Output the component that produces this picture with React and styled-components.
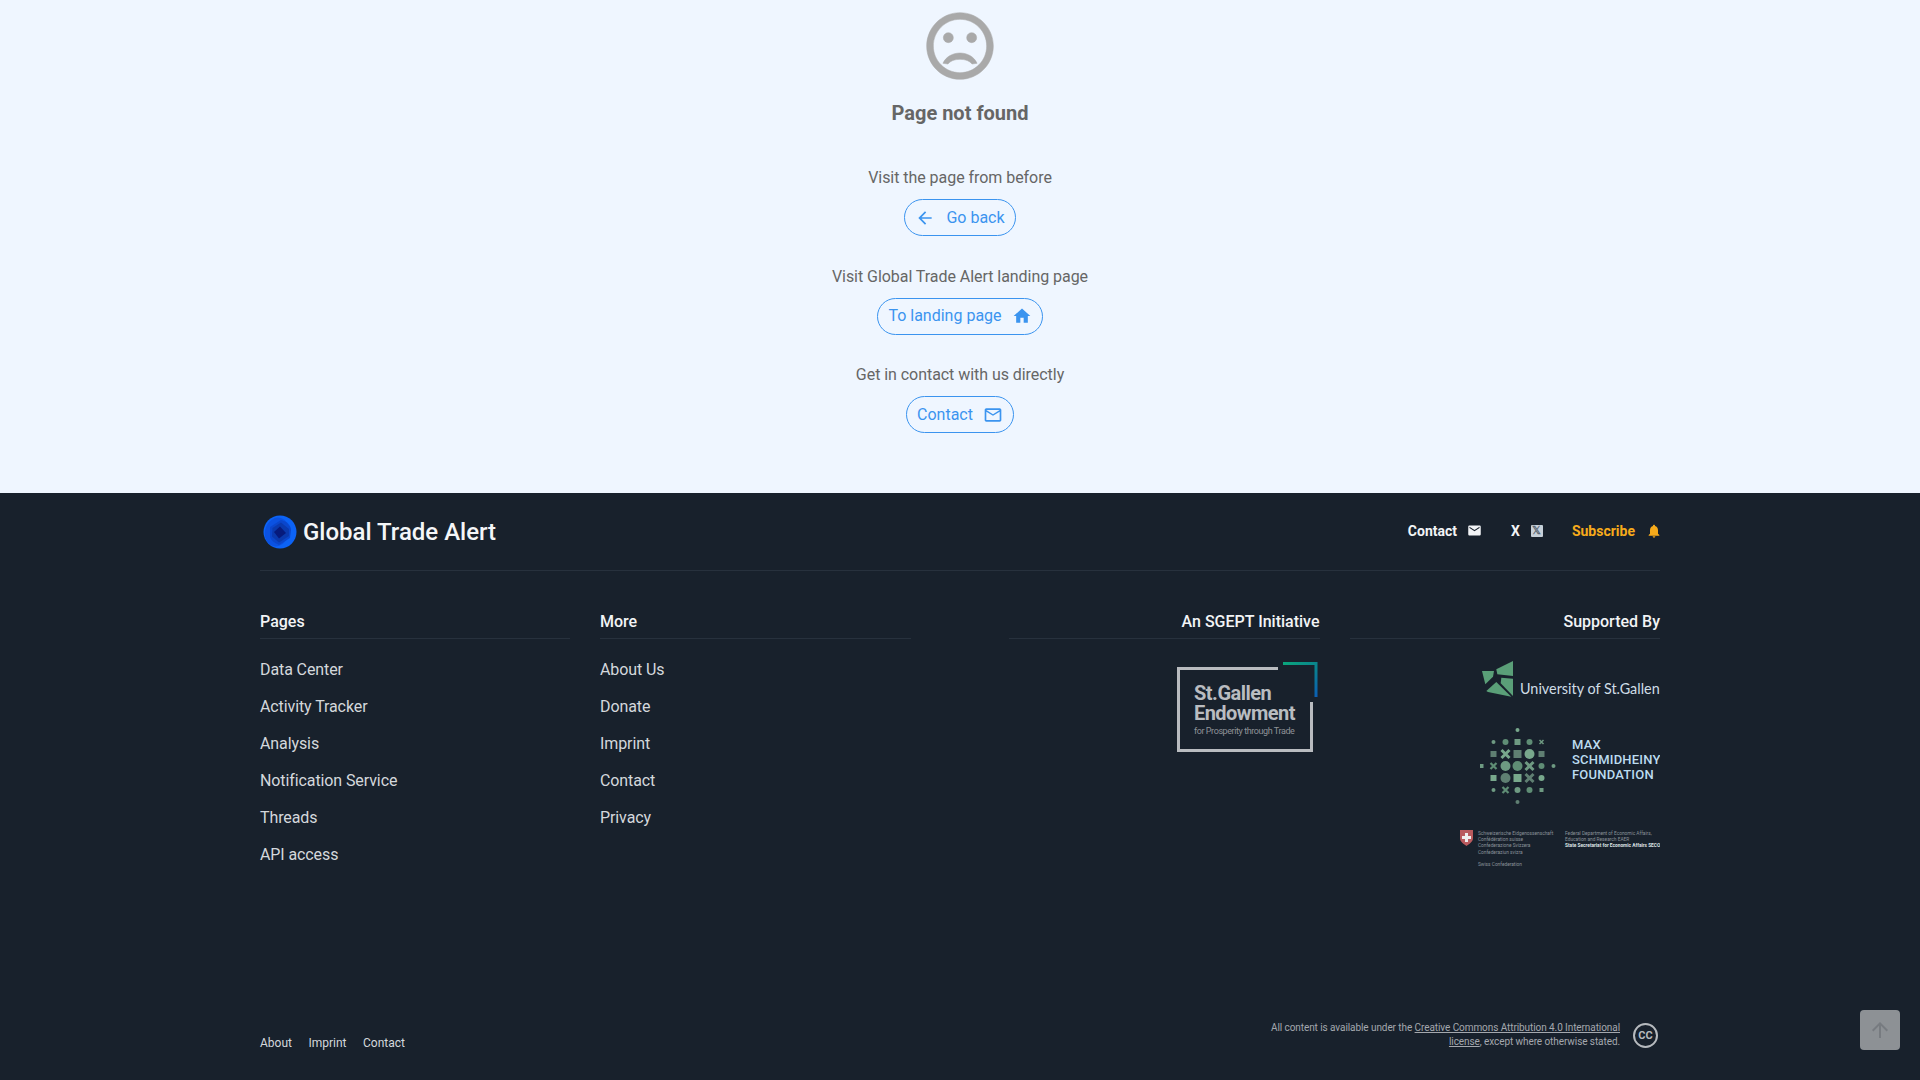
import React from "react";
import styled, { createGlobalStyle } from "styled-components";

const Global = createGlobalStyle`
  html, body { margin: 0; padding: 0; }
  body { font-family: Roboto, "Liberation Sans", sans-serif; background: #eff6ff; }
  #root { min-height: 100vh; display: flex; flex-direction: column; }
  a { color: inherit; text-decoration: none; }
`;

const Main = styled.main`
  display: flex;
  flex-direction: column;
  align-items: center;
  padding: 6px 0 60px;
  background: #eff6ff;
  color: #666;
`;
const SadIcon = styled.svg`
  width: 80px;
  height: 80px;
  fill: #a9a9a9;
  stroke: #a9a9a9;
  stroke-width: 0.15;
  display: block;
`;
const Title = styled.h1`
  margin: 13px 0 39px;
  font-size: 20px;
  line-height: 28px;
  font-weight: 700;
  color: #666;
`;
const Section = styled.section`
  display: flex;
  flex-direction: column;
  align-items: center;
  margin-bottom: 28.5px;
  &:last-child { margin-bottom: 0; }
`;
const Label = styled.p`
  margin: 0 0 9px;
  font-size: 16px;
  line-height: 24px;
  letter-spacing: -0.05px;
  color: #666;
`;
const Pill = styled.a`
  display: inline-flex;
  align-items: center;
  gap: ${p => p.$gap || 12}px;
  height: 37px;
  box-sizing: border-box;
  padding: 0 10px;
  border: 1px solid #3b94ef;
  border-radius: 19px;
  color: #3b94ef;
  font-size: 16px;
  line-height: 24px;
  svg { width: 20px; height: 20px; fill: #3b94ef; display: block; }
`;

const Footer = styled.footer`
  flex: 1;
  display: flex;
  flex-direction: column;
  background: #18212c;
  color: #fff;
  padding: 0 260px;
`;
const TopBar = styled.div`
  height: 77px;
  display: flex;
  align-items: center;
  justify-content: space-between;
  border-bottom: 1px solid #27313d;
`;
const Brand = styled.a`
  display: flex;
  align-items: center;
  gap: 6px;
  padding-left: 3px;
  font-size: 24px;
  font-weight: 500;
  color: #f4f6f8;
  svg { width: 34px; height: 34px; display: block; }
`;
const TopLinks = styled.nav`
  display: flex;
  align-items: center;
  gap: 29px;
  margin: 0 -2px 2px 0;
`;
const TopLink = styled.a`
  display: flex;
  align-items: center;
  gap: ${p => p.$gap || 10}px;
  font-size: 14px;
  font-weight: 700;
  color: ${p => p.$color || "#f2f4f6"};
  svg { width: ${p => p.$icon || 16}px; height: ${p => p.$icon || 16}px; fill: currentColor; display: block; }
`;
const XBox = styled.span`
  width: 12px;
  height: 12px;
  border-radius: 1px;
  background: #c6d0d9;
  color: #5a6672;
  font-size: 11px;
  line-height: 12px;
  font-weight: 700;
  text-align: center;
  display: block;
`;
const Columns = styled.div`
  margin-top: 39px;
  display: grid;
  grid-template-columns: 1fr 1fr;
  column-gap: 98px;
`;
const ColGroup = styled.div`
  display: grid;
  grid-template-columns: ${p => p.$first ? "310px 1fr" : "1fr 1fr"};
  column-gap: 30px;
`;
const Heading = styled.h3`
  margin: 0;
  padding-bottom: 4px;
  border-bottom: 1px solid #27313d;
  font-size: 16px;
  line-height: 24px;
  font-weight: 500;
  color: #f2f4f6;
  text-align: ${p => p.$right ? "right" : "left"};
`;
const LinkList = styled.ul`
  list-style: none;
  margin: 12px 0 0;
  padding: 0;
`;
const LinkItem = styled.li`
  font-size: 16px;
  line-height: 37px;
  letter-spacing: -0.1px;
  color: #d4d8dc;
`;
const Logos = styled.div`
  margin-top: 22px;
  display: flex;
  flex-direction: column;
  align-items: flex-end;
  svg { display: block; }
`;
const MaxWrap = styled.div`
  margin: 25px 0 19px;
`;
const Bottom = styled.div`
  margin-top: auto;
  padding-bottom: 29px;
  display: flex;
  justify-content: space-between;
  align-items: flex-end;
`;
const BottomLinks = styled.nav`
  display: flex;
  gap: 16.5px;
  font-size: 12px;
  line-height: 16px;
  color: #d4d8dc;
`;
const License = styled.div`
  display: flex;
  align-items: center;
  gap: 13px;
  margin: 0 2px 2px 0;
`;
const LicenseText = styled.p`
  margin: 0;
  width: 360px;
  text-align: right;
  font-size: 10px;
  line-height: 14px;
  letter-spacing: -0.08px;
  color: #a4a8ae;
  a { text-decoration: underline; }
`;
const CcBadge = styled.span`
  width: 25px;
  height: 25px;
  box-sizing: border-box;
  border: 2px solid #b6babe;
  border-radius: 50%;
  color: #b6babe;
  font-size: 11px;
  line-height: 21px;
  font-weight: 700;
  text-align: center;
`;
const ToTop = styled.button`
  position: fixed;
  right: 20px;
  bottom: 30px;
  width: 40px;
  height: 40px;
  padding: 8px;
  border: 0;
  border-radius: 4px;
  background: #8d9195;
  svg { width: 24px; height: 24px; fill: #777b80; display: block; }
`;

const P = {
  ring: "M11.99 2C6.47 2 2 6.48 2 12s4.47 10 9.99 10C17.52 22 22 17.52 22 12S17.52 2 11.99 2M12 20c-4.42 0-8-3.58-8-8s3.58-8 8-8 8 3.58 8 8-3.58 8-8 8",
  mouth: "M12 14.1c-2.33 0-4.32 1.25-5.12 3.1l1.5.2c.69-.9 1.97-1.4 3.62-1.4s2.93.5 3.62 1.4l1.5-.2c-.8-1.85-2.79-3.1-5.12-3.1z",
  back: "M20 11H7.83l5.59-5.59L12 4l-8 8 8 8 1.41-1.41L7.83 13H20z",
  home: "M10 20v-6h4v6h5v-8h3L12 3 2 12h3v8z",
  mailO: "M20 4H4c-1.1 0-1.99.9-1.99 2L2 18c0 1.1.9 2 2 2h16c1.1 0 2-.9 2-2V6c0-1.1-.9-2-2-2m0 14H4V8l8 5 8-5zm-8-7L4 6h16z",
  mail: "M20 4H4c-1.1 0-1.99.9-1.99 2L2 18c0 1.1.9 2 2 2h16c1.1 0 2-.9 2-2V6c0-1.1-.9-2-2-2zm0 4l-8 5-8-5V6l8 5 8-5v2z",
  bell: "M12 22c1.1 0 2-.9 2-2h-4c0 1.1.89 2 2 2zm6-6v-5c0-3.07-1.64-5.64-4.5-6.32V4c0-.83-.67-1.5-1.5-1.5s-1.5.67-1.5 1.5v.68C7.63 5.36 6 7.92 6 11v5l-2 2v1h16v-1l-2-2z",
  up: "M4 12l1.41 1.41L11 7.83V20h2V7.83l5.58 5.59L20 12l-8-8-8 8z",
};
const Icon = ({ d }) => <svg viewBox="0 0 24 24"><path d={d} /></svg>;

const Globe = () => (
  <svg viewBox="0 0 34 34">
    <circle cx="17" cy="17" r="16.5" fill="#0c63f6" />
    <ellipse cx="14" cy="17" rx="12" ry="14.5" fill="#0b52e2" transform="rotate(15 14 17)" />
    <path d="M18 5 C23 6 28 10 28 15 L27 23 L16 30 C11 28 8 25 7 22 L7 12Z" fill="#0a46cc" />
    <path d="M18 7.500 L26 14 L26 21 L16 27.500 L9 21.500 L9.500 13Z" fill="#0a39ad" />
    <path d="M17 11.500 L23 18 L16 23.500 L11 17Z" fill="#061a7c" />
  </svg>
);

const Endowment = () => (
  <svg width="144" height="92" viewBox="0 0 144 92">
    <defs>
      <linearGradient id="corner" x1="0" y1="0" x2="1" y2="1">
        <stop offset="0" stopColor="#0aa67c" />
        <stop offset="0.6" stopColor="#0a7f90" />
        <stop offset="1" stopColor="#0b5fb5" />
      </linearGradient>
    </defs>
    <path d="M102 7.500H2.500V89.500H135.500V41" fill="none" stroke="#b9bcc0" strokeWidth="3" />
    <path d="M107 2.500H140V36" fill="none" stroke="url(#corner)" strokeWidth="3" />
    <text x="18" y="39" fontFamily="Roboto, sans-serif" fontWeight="700" fontSize="20" letterSpacing="-0.5" fill="#b9bcc0">St.Gallen</text>
    <text x="18" y="58.500" fontFamily="Roboto, sans-serif" fontWeight="700" fontSize="20" letterSpacing="-0.55" fill="#b9bcc0">Endowment</text>
    <text x="18" y="73" fontFamily="Roboto, sans-serif" fontSize="9" letterSpacing="-0.42" fill="#8f9398">for Prosperity through Trade</text>
  </svg>
);

const University = () => (
  <svg width="178" height="38" viewBox="0 0 178 38">
    <g fill="#5a9f78">
      <path d="M14.300 8.300 L31 0 L31 15 L15.300 13.300Z" />
      <path d="M0 10 L12 10 L11 15.700 L3.300 23.300Z" />
      <path d="M19.300 16.700 L31 17.700 L31 35 L18.700 22.300Z" />
      <path d="M4.300 30 L14.300 21 L29.300 35.700 L6 31Z" />
    </g>
    <text x="38" y="33" fontFamily="Lato, sans-serif" fontSize="14.400" fill="#cfdde6">University of St.Gallen</text>
  </svg>
);

const matrix = [
  ["", "", "", "d2", "", "", ""],
  ["", "d2", "d3", "s3", "d3", "x2", ""],
  ["", "s3", "x4", "s4", "d5", "s3", ""],
  ["s2", "x3", "d5", "d5", "x4", "d3", "d2"],
  ["", "s3", "d5", "s4", "x4", "d3", ""],
  ["", "d2", "x3", "d3", "d3", "s2", ""],
  ["", "", "", "d2", "", "", ""],
];
const shade = (r, c) => ["#5f7f72", "#6e9a82", "#78a88c", "#5f8d75"][(r * 3 + c * 2) % 4];
const MaxLogo = () => (
  <svg width="180" height="84" viewBox="0 0 180 84">
    {matrix.flatMap((row, r) => row.map((cell, c) => {
      if (!cell) return null;
      const x = 1.500 + c * 12, y = 6 + r * 12, n = Number(cell[1]), col = shade(r, c);
      if (cell[0] === "d") return <circle key={`${r}-${c}`} cx={x} cy={y} r={n} fill={col} />;
      if (cell[0] === "s") return <rect key={`${r}-${c}`} x={x - n} y={y - n} width={n * 2} height={n * 2} fill={col} />;
      return <path key={`${r}-${c}`} d={`M${x - n} ${y - n}L${x + n} ${y + n}M${x + n} ${y - n}L${x - n} ${y + n}`} stroke={col} strokeWidth={n * 0.75} />;
    }))}
    <g fontFamily="Roboto, sans-serif" fontWeight="500" fontSize="13" letterSpacing="0.2" fill="#bcdcf0">
      <text x="92" y="25">MAX</text>
      <text x="92" y="40">SCHMIDHEINY</text>
      <text x="92" y="55">FOUNDATION</text>
    </g>
  </svg>
);

const Swiss = () => (
  <svg width="200" height="44" viewBox="0 0 200 44">
    <path d="M0 3H13V11C13 15 9 17 6.500 19C4 17 0 15 0 11Z" fill="#b95a5e" />
    <path d="M5 6H8V9H11V12H8V15H5V12H2V9H5Z" fill="#eee" />
    <g fontFamily="Roboto, sans-serif" fontSize="4.800" fill="#8a9299">
      <text x="18" y="7.500">Schweizerische Eidgenossenschaft</text>
      <text x="18" y="14">Confédération suisse</text>
      <text x="18" y="20">Confederazione Svizzera</text>
      <text x="18" y="26.500">Confederaziun svizra</text>
      <text x="18" y="38.500">Swiss Confederation</text>
      <text x="105" y="7.500">Federal Department of Economic Affairs,</text>
      <text x="105" y="14">Education and Research EAER</text>
      <text x="105" y="20" fill="#dfe3e6" fontWeight="700">State Secretariat for Economic Affairs SECO</text>
    </g>
  </svg>
);

const pages = ["Data Center", "Activity Tracker", "Analysis", "Notification Service", "Threads", "API access"];
const more = ["About Us", "Donate", "Imprint", "Contact", "Privacy"];

export default function App() {
  return (
    <>
      <Global />
      <Main>
        <SadIcon viewBox="0 0 24 24">
          <circle cx="15.5" cy="9.5" r="1.5" />
          <circle cx="8.5" cy="9.5" r="1.5" />
          <path d={P.ring} />
          <path d={P.mouth} />
        </SadIcon>
        <Title>Page not found</Title>
        <Section>
          <Label>Visit the page from before</Label>
          <Pill href="#" $gap={11}><Icon d={P.back} />Go back</Pill>
        </Section>
        <Section>
          <Label>Visit Global Trade Alert landing page</Label>
          <Pill href="#" $gap={10}>To landing page<Icon d={P.home} /></Pill>
        </Section>
        <Section>
          <Label>Get in contact with us directly</Label>
          <Pill href="#" $gap={10}>Contact<Icon d={P.mailO} /></Pill>
        </Section>
      </Main>
      <Footer>
        <TopBar>
          <Brand href="#"><Globe />Global Trade Alert</Brand>
          <TopLinks>
            <TopLink href="#" $icon={15}>Contact<Icon d={P.mail} /></TopLink>
            <TopLink href="#" $gap={11}>X<XBox>𝕏</XBox></TopLink>
            <TopLink href="#" $gap={11} $color="#f7ab1b">Subscribe<Icon d={P.bell} /></TopLink>
          </TopLinks>
        </TopBar>
        <Columns>
          <ColGroup $first>
            <div>
              <Heading>Pages</Heading>
              <LinkList>{pages.map(t => <LinkItem key={t}>{t}</LinkItem>)}</LinkList>
            </div>
            <div>
              <Heading>More</Heading>
              <LinkList>{more.map(t => <LinkItem key={t}>{t}</LinkItem>)}</LinkList>
            </div>
          </ColGroup>
          <ColGroup>
            <div>
              <Heading $right>An SGEPT Initiative</Heading>
              <Logos><Endowment /></Logos>
            </div>
            <div>
              <Heading $right>Supported By</Heading>
              <Logos>
                <University />
                <MaxWrap><MaxLogo /></MaxWrap>
                <Swiss />
              </Logos>
            </div>
          </ColGroup>
        </Columns>
        <Bottom>
          <BottomLinks><a href="#">About</a><a href="#">Imprint</a><a href="#">Contact</a></BottomLinks>
          <License>
            <LicenseText>
              All content is available under the <a href="#">Creative Commons Attribution 4.0 International license</a>, except where otherwise stated.
            </LicenseText>
            <CcBadge>CC</CcBadge>
          </License>
        </Bottom>
      </Footer>
      <ToTop aria-label="Back to top"><Icon d={P.up} /></ToTop>
    </>
  );
}
